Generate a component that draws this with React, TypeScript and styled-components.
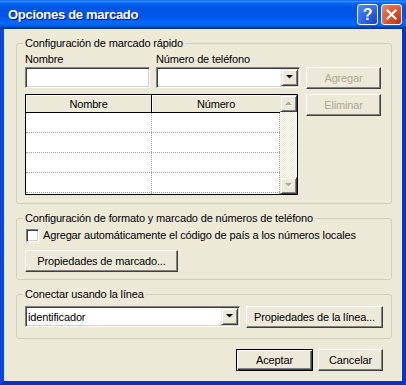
import styled, { createGlobalStyle } from "styled-components";

const GlobalStyle = createGlobalStyle`
  html, body {
    margin: 0;
    padding: 0;
    background: #ece9d8;
  }
  body {
    font-family: "Liberation Sans", Arial, sans-serif;
    font-size: 11px;
    letter-spacing: -0.15px;
    color: #000;
  }
`;

const FACE = "#ece9d8";

const Window = styled.div`
  width: 406px;
  height: 385px;
  display: flex;
  flex-direction: column;
`;

const TitleBar = styled.div`
  height: 29px;
  flex: none;
  display: flex;
  align-items: center;
  gap: 3px;
  padding: 0 4px 0 8px;
  box-sizing: border-box;
  background: linear-gradient(
    to bottom,
    #0058ee 0%,
    #3593ff 4%,
    #288eff 6%,
    #127dff 8%,
    #036ffc 10%,
    #0262ee 14%,
    #0057e5 20%,
    #0054e3 24%,
    #0055eb 56%,
    #005bf5 66%,
    #026afe 76%,
    #0062ef 86%,
    #0052d6 92%,
    #0040ab 94%,
    #003092 100%
  );
`;

const Title = styled.span`
  flex: 1;
  font-weight: bold;
  font-size: 13px;
  letter-spacing: -0.3px;
  color: #fff;
  text-shadow: 1px 1px #0a1883;
`;

const CaptionButton = styled.div<{ $kind: "help" | "close" }>`
  width: 21px;
  height: 21px;
  box-sizing: border-box;
  border: 1px solid #fff;
  border-radius: 3px;
  display: flex;
  align-items: center;
  justify-content: center;
  color: #fff;
  font-weight: bold;
  font-size: 16px;
  background: ${(p) =>
    p.$kind === "help"
      ? "radial-gradient(circle at 90% 90%, #1c47c9 0%, #2a63e2 45%, #5a8cf5 100%)"
      : "radial-gradient(circle at 90% 90%, #c23514 0%, #d9502a 45%, #ec8a6a 100%)"};
`;

const Frame = styled.div`
  flex: 1;
  display: flex;
  border-style: solid;
  border-width: 0 4px 4px 4px;
  border-color: #0a48e0 #0636c4 #0733c0 #0a46dc;
  background: ${FACE};
`;

const Client = styled.div`
  flex: 1;
  display: flex;
  flex-direction: column;
  gap: 8px;
  padding: 8px 10px 0 12px;
`;

const Group = styled.fieldset<{ $pt: number; $pb: number }>`
  margin: 0;
  padding: ${(p) => p.$pt}px 8px ${(p) => p.$pb}px 8px;
  border: 1px solid #d0d0bf;
  border-radius: 3px;
  min-width: 0;
`;

const Legend = styled.legend`
  padding: 0 2px;
  margin-left: -2px;
  line-height: 13px;
`;

const QuickRow = styled.div`
  display: flex;
  gap: 6px;
`;

const LeftPane = styled.div`
  display: flex;
  flex-direction: column;
  gap: 6px;
`;

const FieldGrid = styled.div`
  display: grid;
  grid-template-columns: 125px 144px;
  column-gap: 6px;
`;

const Label = styled.span`
  height: 14px;
  line-height: 13px;
`;

const Sunken = styled.div<{ $w: number }>`
  width: ${(p) => p.$w}px;
  height: 21px;
  box-sizing: border-box;
  background: #fff;
  border: 1px solid;
  border-color: #808080 #fff #fff #808080;
  box-shadow: inset 1px 1px #404040, inset -1px -1px #d4d0c8;
  display: flex;
  align-items: center;
  padding: 1px;
`;

const ComboText = styled.span`
  flex: 1;
  padding-left: 1px;
`;

const Raised = styled.div`
  box-sizing: border-box;
  background: ${FACE};
  border: 1px solid;
  border-color: ${FACE} #404040 #404040 ${FACE};
  box-shadow: inset 1px 1px #fff, inset -1px -1px #808080;
  display: flex;
  align-items: center;
  justify-content: center;
`;

const ArrowButton = styled(Raised)`
  width: 17px;
  height: 17px;
  flex: none;
`;

const Button = styled.div<{ $w: number; $disabled?: boolean; $default?: boolean }>`
  width: ${(p) => p.$w}px;
  height: 22px;
  box-sizing: border-box;
  background: ${FACE};
  border: 1px solid;
  border-color: ${(p) => (p.$default ? "#000" : `#fff #404040 #404040 #fff`)};
  box-shadow: ${(p) =>
    p.$default
      ? "inset 1px 1px #fff, inset -1px -1px #404040, inset -2px -2px #808080"
      : "inset -1px -1px #808080"};
  color: ${(p) => (p.$disabled ? "#aca899" : "#000")};
  display: flex;
  align-items: center;
  justify-content: center;
  flex: none;
`;

const SideButtons = styled.div`
  display: flex;
  flex-direction: column;
  gap: 5px;
  padding-top: 14px;
`;

const ListView = styled.div`
  width: 273px;
  height: 101px;
  box-sizing: border-box;
  border: 1px solid #000;
  display: flex;
  background: #fff;
`;

const ListColumns = styled.div`
  flex: 1;
  display: flex;
  flex-direction: column;
`;

const HeaderRow = styled.div`
  height: 18px;
  display: grid;
  grid-template-columns: 126px 1fr;
  background: ${FACE};
  border-bottom: 1px solid #000;
  box-sizing: border-box;
`;

const HeaderCell = styled.div<{ $last?: boolean }>`
  display: flex;
  align-items: center;
  justify-content: center;
  border-right: ${(p) => (p.$last ? "none" : "1px solid #000")};
  box-shadow: inset 1px 1px #fff;
`;

const Row = styled.div`
  height: 20px;
  box-sizing: border-box;
  display: grid;
  grid-template-columns: 126px 1fr;
  border-bottom: 1px dotted #a0a0a0;
`;

const Cell = styled.div`
  border-right: 1px dotted #a0a0a0;
`;

const RowFill = styled.div`
  flex: 1;
  display: grid;
  grid-template-columns: 126px 1fr;
`;

const ScrollBar = styled.div`
  width: 17px;
  display: flex;
  flex-direction: column;
  background: repeating-conic-gradient(${FACE} 0 25%, #fff 0 50%) 0 0 / 2px 2px;
`;

const Track = styled.div`
  flex: 1;
`;

const CheckRow = styled.div`
  height: 14px;
  display: flex;
  align-items: center;
  gap: 4px;
  padding-left: 1px;
`;

const CheckBox = styled.div`
  width: 13px;
  height: 13px;
  box-sizing: border-box;
  background: #fff;
  border: 1px solid;
  border-color: #808080 #fff #fff #808080;
  box-shadow: inset 1px 1px #404040, inset -1px -1px #d4d0c8;
`;

const Stack = styled.div<{ $gap: number }>`
  display: flex;
  flex-direction: column;
  align-items: flex-start;
  gap: ${(p) => p.$gap}px;
`;

const LineRow = styled.div`
  display: flex;
  align-items: flex-start;
  gap: 6px;
`;

const DialogButtons = styled.div`
  display: flex;
  justify-content: flex-end;
  gap: 5px;
  padding: 2px 9px 0 0;
`;

function Triangle({ up, disabled }: { up?: boolean; disabled?: boolean }) {
  const points = up ? "0,4 7,4 3.5,0.5" : "0,0 7,0 3.5,3.5";
  return (
    <svg width="8" height="5" viewBox="0 0 8 5">
      {disabled && <polygon points={points} fill="#fff" transform="translate(1,1)" />}
      <polygon points={points} fill={disabled ? "#aca899" : "#000"} />
    </svg>
  );
}

function Combo({ width, value }: { width: number; value?: string }) {
  return (
    <Sunken $w={width}>
      <ComboText>{value}</ComboText>
      <ArrowButton>
        <Triangle />
      </ArrowButton>
    </Sunken>
  );
}

export default function App() {
  return (
    <Window>
      <GlobalStyle />
      <TitleBar>
        <Title>Opciones de marcado</Title>
        <CaptionButton $kind="help">?</CaptionButton>
        <CaptionButton $kind="close">
          <svg width="11" height="11" viewBox="0 0 11 11">
            <path d="M1.5 1.5 L9.5 9.5 M9.5 1.5 L1.5 9.5" stroke="#fff" strokeWidth="2.2" strokeLinecap="square" />
          </svg>
        </CaptionButton>
      </TitleBar>
      <Frame>
        <Client>
          <Group $pt={3} $pb={8}>
            <Legend>Configuración de marcado rápido</Legend>
            <QuickRow>
              <LeftPane>
                <FieldGrid>
                  <Label>Nombre</Label>
                  <Label>Número de teléfono</Label>
                  <Sunken $w={125} />
                  <Combo width={144} />
                </FieldGrid>
                <ListView>
                  <ListColumns>
                    <HeaderRow>
                      <HeaderCell>Nombre</HeaderCell>
                      <HeaderCell $last>Número</HeaderCell>
                    </HeaderRow>
                    {[0, 1, 2, 3].map((i) => (
                      <Row key={i}>
                        <Cell />
                        <Cell />
                      </Row>
                    ))}
                    <RowFill>
                      <Cell />
                      <Cell />
                    </RowFill>
                  </ListColumns>
                  <ScrollBar>
                    <ArrowButton>
                      <Triangle up disabled />
                    </ArrowButton>
                    <Track />
                    <ArrowButton>
                      <Triangle disabled />
                    </ArrowButton>
                  </ScrollBar>
                </ListView>
              </LeftPane>
              <SideButtons>
                <Button $w={75} $disabled>Agregar</Button>
                <Button $w={75} $disabled>Eliminar</Button>
              </SideButtons>
            </QuickRow>
          </Group>

          <Group $pt={3} $pb={7}>
            <Legend>Configuración de formato y marcado de números de teléfono</Legend>
            <Stack $gap={8}>
              <CheckRow>
                <CheckBox />
                <span>Agregar automáticamente el código de país a los números locales</span>
              </CheckRow>
              <Button $w={153}>Propiedades de marcado...</Button>
            </Stack>
          </Group>

          <Group $pt={5} $pb={10}>
            <Legend>Conectar usando la línea</Legend>
            <LineRow>
              <Combo width={215} value="identificador" />
              <Button $w={137}>Propiedades de la línea...</Button>
            </LineRow>
          </Group>

          <DialogButtons>
            <Button $w={77} $default>Aceptar</Button>
            <Button $w={65}>Cancelar</Button>
          </DialogButtons>
        </Client>
      </Frame>
    </Window>
  );
}
